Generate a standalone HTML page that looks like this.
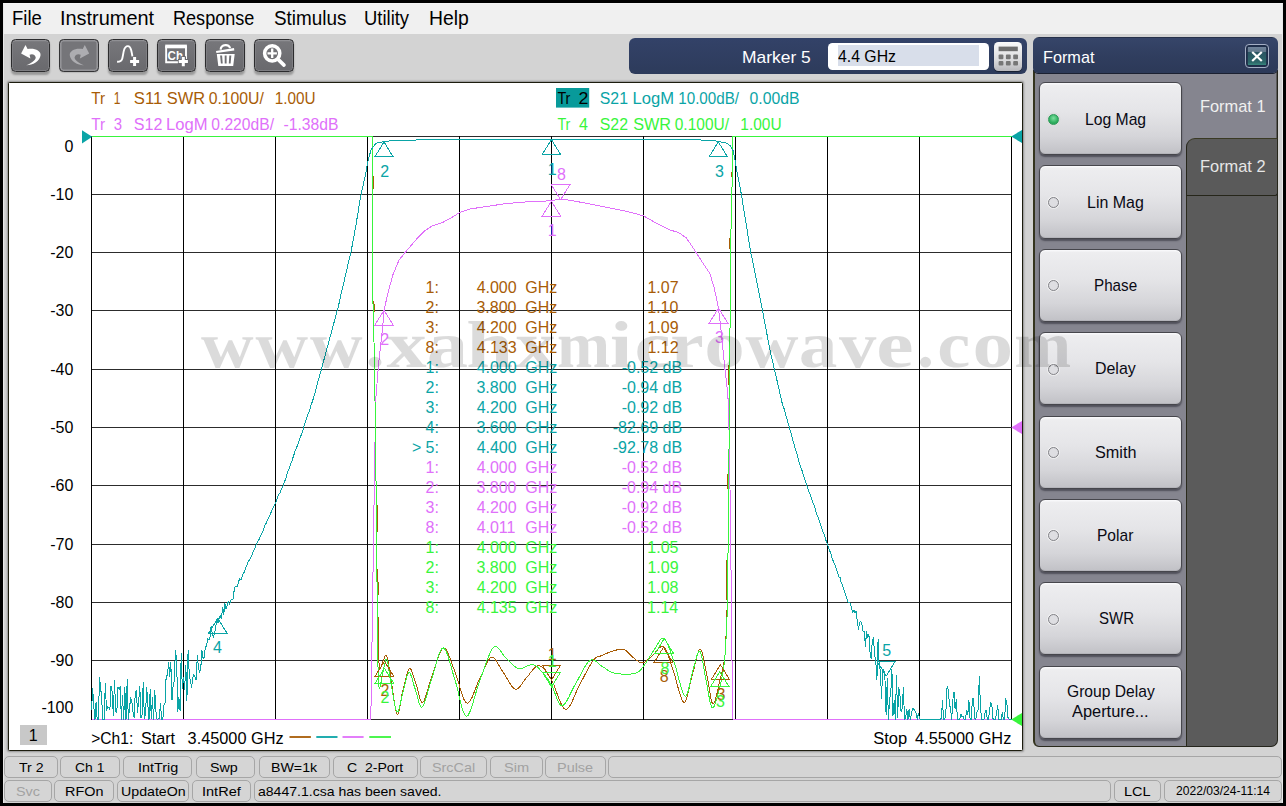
<!DOCTYPE html><html><head><meta charset="utf-8"><title>Network Analyzer</title><style>
html,body{margin:0;padding:0;background:#000;}
body{width:1286px;height:806px;position:relative;overflow:hidden;font-family:"Liberation Sans",sans-serif;}
.app{position:absolute;left:3px;top:3px;width:1280px;height:799.5px;background:#d3d3d3;box-sizing:border-box;border-left:1px solid #e8e8e8;border-top:1px solid #f4f4f4;border-right:1px solid #e9e9e9;}
.menubar{position:absolute;left:4px;top:4px;width:1278px;height:30px;background:#f0f0f0;}
.t{position:absolute;white-space:pre;transform-origin:0 0;z-index:5;}
.chartwin{position:absolute;left:8px;top:82px;width:1015px;height:669px;background:#fff;box-sizing:border-box;border:1px solid #1c1c0e;border-radius:1.5px;box-shadow:0 0 2px 0.5px rgba(0,0,0,.32);}
svg.chart,svg.ov{position:absolute;left:0;top:0;pointer-events:none;}
.tb{position:absolute;top:39.4px;width:39.8px;height:32.2px;box-sizing:border-box;border:1.5px solid #2c2c2e;border-radius:4.5px;background:linear-gradient(#77777b,#707074 50%,#69696d);box-shadow:inset 0 1.2px 0 #909094,inset 0 0 0 1px #7e7e82,0 2.5px 2px rgba(0,0,0,0.28);}
.tb.dis{background:#757579;box-shadow:inset 0 0 0 1.6px #949498,0 1px 1px rgba(0,0,0,0.12);border-color:#343436;}
.mbar{position:absolute;left:628.5px;top:37.8px;width:398.8px;height:36.6px;border-radius:6px;background:linear-gradient(#334268,#2d3b5b);}
.minput{position:absolute;left:828px;top:42.8px;width:161.3px;height:27.4px;border-radius:4.5px;background:#fff;}
.msel{position:absolute;left:10.2px;top:2.3px;width:140.8px;height:21px;background:#d8deea;}
.mcalc{position:absolute;left:994px;top:42.3px;width:28px;height:28.7px;border-radius:4.5px;background:linear-gradient(#fafafa,#dcdcde 60%,#b8b8bc);box-shadow:0 1px 1px rgba(0,0,0,.5);overflow:hidden;}
.phead{position:absolute;left:1033.4px;top:37px;width:244.4px;height:36.4px;border-radius:6px 6px 5px 5px;background:linear-gradient(#1e263a 0,#364569 4%,#303e5f 50%,#2c3958);box-shadow:0 1px 0 #1a2030;z-index:2;}
.pbody{position:absolute;left:1033px;top:70px;width:154.4px;height:677px;box-sizing:border-box;background:#85858f;border:1.6px solid #2a2a1c;border-left:2px solid #34341e;border-top:none;border-radius:0 0 0 6px;}
.pdark{position:absolute;left:1186.6px;top:70px;width:91px;height:677px;box-sizing:border-box;background:#5b5b5b;border:1.4px solid #25251c;border-top:none;border-left:none;border-radius:0 0 7px 0;}
.pdark:before{content:"";position:absolute;left:-1.2px;top:0;width:90.8px;height:78px;background:#85858f;box-sizing:border-box;}
.tab2{position:absolute;left:1186.4px;top:137.6px;width:91.2px;height:58.4px;box-sizing:border-box;background:#5a5a5a;border:1.5px solid #26261a;border-radius:9px 0 3px 0;border-top-color:#3a3a24;}
.pclose{position:absolute;left:1245.4px;top:44.2px;width:23.8px;height:23.8px;box-sizing:border-box;border:1.2px solid #a4aec4;border-radius:4px;background:linear-gradient(#1f2e4a 0,#1f2e4a 9%,#70839a 10%,#62788c 31%,#2a5462 32%,#2d6669 78%,#3a8a80 92%,#1f2e4a 93%);box-shadow:inset 0 0 0 1.8px #1f2e4a;z-index:3;}
.pclose svg{position:absolute;left:0;top:0;}
.sk{position:absolute;left:1038.7px;width:143px;height:73.4px;box-sizing:border-box;border:1.5px solid #46464c;border-radius:6px;background:linear-gradient(#eeeef0,#e5e5e8 40%,#d5d5d9 75%,#c1c1c6);box-shadow:inset 0 1.5px 0 #f8f8fa,inset 0 -1px 0 #b4b4ba,0 2px 1.5px rgba(30,30,40,.5);}
.rad{position:absolute;left:1047.8px;width:11px;height:11px;box-sizing:border-box;border-radius:50%;border:1.8px solid #808085;background:#dedee2;box-shadow:0 0 0 1px rgba(255,255,255,.5);}
.rad.on{border:1.2px solid #2c9a58;background:radial-gradient(circle at 50% 35%,#7fe0a0,#2fb060 60%,#249650);box-shadow:0 0 0 1.5px #dcdcdc;}
.sc{position:absolute;border:1px solid #a6a6a6;border-radius:5px;background:#d5d5d5;}
</style></head><body>
<div class="app"></div>
<div class="menubar"></div>
<div class="t" style="left:12.17px;top:6.80px;font-size:20px;line-height:22px;height:22px;color:#000;transform:scaleX(0.9259);">File</div>
<div class="t" style="left:60.06px;top:6.80px;font-size:20px;line-height:22px;height:22px;color:#000;transform:scaleX(0.9957);">Instrument</div>
<div class="t" style="left:173.41px;top:6.80px;font-size:20px;line-height:22px;height:22px;color:#000;transform:scaleX(0.9035);">Response</div>
<div class="t" style="left:273.55px;top:6.80px;font-size:20px;line-height:22px;height:22px;color:#000;transform:scaleX(0.9441);">Stimulus</div>
<div class="t" style="left:363.77px;top:6.80px;font-size:20px;line-height:22px;height:22px;color:#000;transform:scaleX(0.9218);">Utility</div>
<div class="t" style="left:429.00px;top:6.80px;font-size:20px;line-height:22px;height:22px;color:#000;transform:scaleX(0.9677);">Help</div>
<div class="tb" style="left:10.6px"></div>
<div class="tb dis" style="left:59.2px"></div>
<div class="tb" style="left:107.9px"></div>
<div class="tb" style="left:156.6px"></div>
<div class="tb" style="left:205.4px"></div>
<div class="tb" style="left:254.1px"></div>
<svg class="ov" width="1286" height="806" viewBox="0 0 1286 806"><path d="M21.1 53.5 L25.5 45.1 L27.6 49.1 C31 48.2 35.5 48.8 37.9 50.6 C40 52.2 40.8 53.5 40.5 55.5 C40.2 58 38.5 60.5 35.6 62.5 C33 64.2 29.5 65.2 26.3 65.3 C29 64.6 32 62.6 34.1 60.6 C35.6 59 35.9 57.8 35.6 57 C35.2 55.6 33.8 54.4 31.9 54.3 L29.6 54.7 L30.4 58.4 Z" fill="#fff"/><g transform="translate(110.3 0) scale(-1 1)"><path d="M21.1 53.5 L25.5 45.1 L27.6 49.1 C31 48.2 35.5 48.8 37.9 50.6 C40 52.2 40.8 53.5 40.5 55.5 C40.2 58 38.5 60.5 35.6 62.5 C33 64.2 29.5 65.2 26.3 65.3 C29 64.6 32 62.6 34.1 60.6 C35.6 59 35.9 57.8 35.6 57 C35.2 55.6 33.8 54.4 31.9 54.3 L29.6 54.7 L30.4 58.4 Z" fill="#adadb1"/></g><path d="M117.1 61.8 C120.5 61.9 121.6 61 122.3 58.4 C123 55.8 123.2 53.5 123.8 50.9 C124.6 47.5 126 46.1 127.9 46.1 C129.8 46.1 130.6 47.8 131.2 50.2 C131.8 52.6 132 54 132.4 56.3" stroke="#fff" stroke-width="1.9" fill="none"/><path d="M130.1 61.6 H139.1 M134.6 57.1 V66.1" stroke="#fff" stroke-width="3" fill="none"/><path d="M166.15 46 V62.25 H186 V46" fill="none" stroke="#fff" stroke-width="1.9"/><rect x="165.2" y="44.6" width="21.7" height="3.7" fill="#fff"/><text x="167.6" y="59.5" font-size="12.4" font-weight="bold" fill="#fff" font-family='"Liberation Sans", sans-serif' textLength="15.4" lengthAdjust="spacingAndGlyphs">Ch</text><path d="M177.9 61.6 H188.7 M183.3 56.2 V67" stroke="#69696d" stroke-width="5.4" fill="none"/><path d="M178.7 61.6 H187.9 M183.3 57 V66.2" stroke="#fff" stroke-width="3" fill="none"/><path d="M220.6 49.6 C221 44.2 229.6 43.6 230 48.2" stroke="#fff" stroke-width="2.1" fill="none"/><path d="M216 50.9 L234 47.9 L234.3 50.6 L216.4 52.9 Z" fill="#fff"/><path d="M216.8 53.9 H234.7 L233.2 65.9 H218.3 Z M220.1 55.6 L220.9 63.6 H222.7 L222.1 55.6 Z M224.7 55.6 V63.6 H226.6 V55.6 Z M229.3 55.6 L228.8 63.6 H230.6 L231.3 55.6 Z" fill="#fff" fill-rule="evenodd"/><circle cx="272.2" cy="53.3" r="7.6" stroke="#fff" stroke-width="3.5" fill="none"/><path d="M267.5 53.3 H276.9 M272.2 48.6 V58" stroke="#fff" stroke-width="2.3" fill="none"/><path d="M278.6 59.9 L284 65.1" stroke="#fff" stroke-width="3.6" stroke-linecap="round" fill="none"/></svg>
<div class="mbar"></div>
<div class="minput"><div class="msel"></div></div>
<div class="mcalc"><svg width="28" height="29" viewBox="0 0 28 29"><rect x="4.6" y="4.6" width="19.2" height="4.6" fill="#6e6e6e"/><rect x="4.6" y="12.6" width="4.8" height="4.6" rx="1" fill="#767676"/><rect x="4.6" y="19.0" width="4.8" height="4.6" rx="1" fill="#767676"/><rect x="11.9" y="12.6" width="4.8" height="4.6" rx="1" fill="#767676"/><rect x="11.9" y="19.0" width="4.8" height="4.6" rx="1" fill="#767676"/><rect x="19.2" y="12.6" width="4.8" height="4.6" rx="1" fill="#767676"/><rect x="19.2" y="19.0" width="4.8" height="4.6" rx="1" fill="#767676"/></svg></div>
<div class="t" style="left:742.16px;top:47.70px;font-size:17px;line-height:19px;height:19px;color:#fff;transform:scaleX(1.0249);">Marker 5</div>
<div class="t" style="left:838.34px;top:47.00px;font-size:16.5px;line-height:18px;height:18px;color:#000;transform:scaleX(0.9576);">4.4 GHz</div>
<div class="chartwin"></div>
<svg class="chart" width="1286" height="806" viewBox="0 0 1286 806" font-family='"Liberation Sans", sans-serif'>
<path d="M91.0 136.5 H1012.0 M91.0 194.5 H1012.0 M91.0 252.5 H1012.0 M91.0 310.5 H1012.0 M91.0 369.5 H1012.0 M91.0 427.5 H1012.0 M91.0 485.5 H1012.0 M91.0 544.5 H1012.0 M91.0 602.5 H1012.0 M91.0 660.5 H1012.0 M91.0 719.5 H1012.0" stroke="#2c2c2c" stroke-width="1" fill="none" shape-rendering="crispEdges"/>
<path d="M91.5 136.0 V720.0 M183.5 136.0 V720.0 M275.5 136.0 V720.0 M367.5 136.0 V720.0 M459.5 136.0 V720.0 M551.5 136.0 V720.0 M643.5 136.0 V720.0 M735.5 136.0 V720.0 M827.5 136.0 V720.0 M919.5 136.0 V720.0 M1011.5 136.0 V720.0" stroke="#000" stroke-width="1" fill="none" shape-rendering="crispEdges"/>
<text x="91.16" y="103.80" font-size="16" fill="#a85c06" textLength="13.86" lengthAdjust="spacingAndGlyphs" >Tr</text>
<text x="113.70" y="103.80" font-size="16" fill="#a85c06" textLength="6.69" lengthAdjust="spacingAndGlyphs" >1</text>
<text x="133.75" y="103.80" font-size="16" fill="#a85c06" textLength="28.45" lengthAdjust="spacingAndGlyphs" >S11</text>
<text x="166.76" y="103.80" font-size="16" fill="#a85c06" textLength="38.33" lengthAdjust="spacingAndGlyphs" >SWR</text>
<text x="208.67" y="103.80" font-size="16" fill="#a85c06" textLength="55.23" lengthAdjust="spacingAndGlyphs" >0.100U/</text>
<text x="274.85" y="103.80" font-size="16" fill="#a85c06" textLength="40.81" lengthAdjust="spacingAndGlyphs" >1.00U</text>
<text x="91.16" y="129.50" font-size="16" fill="#e070fa" textLength="13.86" lengthAdjust="spacingAndGlyphs" >Tr</text>
<text x="113.74" y="129.50" font-size="16" fill="#e070fa" textLength="8.31" lengthAdjust="spacingAndGlyphs" >3</text>
<text x="133.78" y="129.50" font-size="16" fill="#e070fa" textLength="28.66" lengthAdjust="spacingAndGlyphs" >S12</text>
<text x="166.13" y="129.50" font-size="16" fill="#e070fa" textLength="41.57" lengthAdjust="spacingAndGlyphs" >LogM</text>
<text x="211.37" y="129.50" font-size="16" fill="#e070fa" textLength="62.64" lengthAdjust="spacingAndGlyphs" >0.220dB/</text>
<text x="283.49" y="129.50" font-size="16" fill="#e070fa" textLength="55.03" lengthAdjust="spacingAndGlyphs" >-1.38dB</text>
<rect x="556" y="88" width="33.2" height="19.6" fill="#089a9a"/>
<text x="557.38" y="103.80" font-size="16" fill="#000" textLength="13.03" lengthAdjust="spacingAndGlyphs" >Tr</text>
<text x="578.41" y="103.80" font-size="16" fill="#000" textLength="9.90" lengthAdjust="spacingAndGlyphs" >2</text>
<text x="599.79" y="103.80" font-size="16" fill="#0aa4a6" textLength="28.19" lengthAdjust="spacingAndGlyphs" >S21</text>
<text x="632.53" y="103.80" font-size="16" fill="#0aa4a6" textLength="41.57" lengthAdjust="spacingAndGlyphs" >LogM</text>
<text x="678.26" y="103.80" font-size="16" fill="#0aa4a6" textLength="60.75" lengthAdjust="spacingAndGlyphs" >10.00dB/</text>
<text x="749.57" y="103.80" font-size="16" fill="#0aa4a6" textLength="49.95" lengthAdjust="spacingAndGlyphs" >0.00dB</text>
<text x="557.38" y="129.50" font-size="16" fill="#38f53c" textLength="13.03" lengthAdjust="spacingAndGlyphs" >Tr</text>
<text x="578.94" y="129.50" font-size="16" fill="#38f53c" textLength="8.92" lengthAdjust="spacingAndGlyphs" >4</text>
<text x="599.79" y="129.50" font-size="16" fill="#38f53c" textLength="28.24" lengthAdjust="spacingAndGlyphs" >S22</text>
<text x="633.17" y="129.50" font-size="16" fill="#38f53c" textLength="37.91" lengthAdjust="spacingAndGlyphs" >SWR</text>
<text x="674.78" y="129.50" font-size="16" fill="#38f53c" textLength="54.22" lengthAdjust="spacingAndGlyphs" >0.100U/</text>
<text x="740.34" y="129.50" font-size="16" fill="#38f53c" textLength="41.34" lengthAdjust="spacingAndGlyphs" >1.00U</text>
<text x="64.52" y="152.05" font-size="16" fill="#000" textLength="8.90" lengthAdjust="spacingAndGlyphs" >0</text>
<text x="50.28" y="200.25" font-size="16" fill="#000" textLength="23.13" lengthAdjust="spacingAndGlyphs" >-10</text>
<text x="50.28" y="258.25" font-size="16" fill="#000" textLength="23.13" lengthAdjust="spacingAndGlyphs" >-20</text>
<text x="50.28" y="316.25" font-size="16" fill="#000" textLength="23.13" lengthAdjust="spacingAndGlyphs" >-30</text>
<text x="50.28" y="375.25" font-size="16" fill="#000" textLength="23.13" lengthAdjust="spacingAndGlyphs" >-40</text>
<text x="50.28" y="433.25" font-size="16" fill="#000" textLength="23.13" lengthAdjust="spacingAndGlyphs" >-50</text>
<text x="50.28" y="491.25" font-size="16" fill="#000" textLength="23.13" lengthAdjust="spacingAndGlyphs" >-60</text>
<text x="50.28" y="550.25" font-size="16" fill="#000" textLength="23.13" lengthAdjust="spacingAndGlyphs" >-70</text>
<text x="50.28" y="608.25" font-size="16" fill="#000" textLength="23.13" lengthAdjust="spacingAndGlyphs" >-80</text>
<text x="50.28" y="666.25" font-size="16" fill="#000" textLength="23.13" lengthAdjust="spacingAndGlyphs" >-90</text>
<text x="41.40" y="713.05" font-size="16" fill="#000" textLength="32.02" lengthAdjust="spacingAndGlyphs" >-100</text>
<polyline points="373.5,176.0 373.5,295.0 374.5,312.0 376.5,430.0 378.2,600.0 378.2,640.0" fill="none" stroke="#a85c06" stroke-width="1" stroke-linejoin="round" shape-rendering="crispEdges" stroke-dasharray="13 112 11 193 27 37 26 22 400"/>
<polyline points="378.2,640.0 378.3,642.4 378.4,645.9 378.5,650.0 378.7,654.5 378.8,658.9 379.0,662.9 379.3,666.0 379.6,668.0 380.0,668.7 380.4,668.4 380.9,667.5 381.5,666.0 382.0,664.3 382.5,662.6 383.0,661.1 383.5,660.0 383.9,659.1 384.3,658.1 384.6,657.1 385.0,656.2 385.3,655.5 385.6,655.1 386.0,655.0 386.4,655.5 386.8,656.4 387.2,657.6 387.5,659.0 387.9,660.8 388.4,663.0 388.8,665.6 389.4,668.6 390.0,672.0 390.7,676.5 391.5,682.3 392.4,688.8 393.4,695.5 394.3,702.0 395.2,707.5 396.1,711.7 397.0,714.0 397.8,714.1 398.6,712.6 399.3,709.7 400.0,706.0 400.8,701.7 401.5,697.4 402.2,693.3 403.0,690.0 403.8,686.9 404.6,683.6 405.4,680.1 406.2,676.8 407.0,673.7 407.9,671.2 408.7,669.4 409.5,668.5 410.3,668.6 411.1,669.7 411.9,671.5 412.7,673.8 413.5,676.3 414.4,679.1 415.2,681.7 416.0,684.0 416.8,686.5 417.6,689.4 418.4,692.7 419.2,695.8 420.0,698.7 420.8,700.9 421.7,702.2 422.7,702.4 423.7,701.3 424.8,699.0 425.9,695.9 427.0,692.1 428.2,688.0 429.4,683.8 430.7,679.7 432.0,676.0 433.4,672.2 434.8,667.9 436.2,663.3 437.7,658.9 439.2,654.8 440.7,651.4 442.2,649.0 443.7,648.0 445.1,648.5 446.5,650.2 447.9,652.9 449.3,656.3 450.7,660.2 452.1,664.3 453.6,668.3 455.0,672.0 456.5,675.9 457.9,680.6 459.4,685.7 460.9,690.7 462.4,695.3 463.9,699.2 465.4,701.9 467.0,703.2 468.6,702.7 470.2,700.8 471.9,697.7 473.5,693.8 475.2,689.6 476.8,685.3 478.4,681.3 480.0,678.0 481.5,675.0 483.0,671.7 484.4,668.4 485.8,665.2 487.2,662.3 488.6,659.9 490.0,658.2 491.4,657.3 492.8,657.4 494.3,658.4 495.7,660.1 497.1,662.3 498.6,664.7 500.0,667.3 501.5,669.8 503.0,672.0 504.5,674.2 506.1,676.8 507.7,679.6 509.3,682.3 510.8,684.8 512.4,686.9 514.0,688.4 515.5,689.2 517.0,689.1 518.4,688.2 519.9,686.7 521.3,684.9 522.7,682.8 524.1,680.7 525.6,678.7 527.0,677.0 528.5,675.4 529.9,673.5 531.4,671.5 532.9,669.6 534.4,668.0 535.9,666.6 537.4,665.8 538.9,665.6 540.4,666.1 542.0,667.0 543.5,668.5 545.1,670.3 546.6,672.4 548.2,674.7 549.9,677.3 551.5,680.0 553.2,683.3 554.9,687.6 556.6,692.3 558.4,697.2 560.2,701.7 561.9,705.6 563.7,708.2 565.5,709.4 567.3,708.8 569.1,706.9 571.0,703.8 572.8,700.0 574.6,695.8 576.5,691.5 578.2,687.5 580.0,684.0 581.7,680.8 583.5,677.5 585.2,674.2 587.0,670.9 588.6,667.8 590.3,664.9 591.8,662.4 593.2,660.4 594.5,658.9 595.5,657.9 596.5,657.2 597.4,656.8 598.3,656.6 599.3,656.3 600.5,656.0 601.8,655.5 603.4,654.8 605.2,654.0 607.1,653.2 609.2,652.4 611.2,651.7 613.1,651.0 614.9,650.4 616.5,650.0 617.9,649.7 619.1,649.5 620.2,649.3 621.2,649.2 622.2,649.3 623.1,649.4 624.1,649.7 625.0,650.0 625.9,650.5 626.8,651.2 627.6,652.0 628.4,652.9 629.2,653.8 630.1,654.7 631.0,655.7 632.0,656.5 633.1,657.4 634.3,658.4 635.6,659.5 636.9,660.5 638.3,661.4 639.6,662.2 640.9,662.6 642.2,662.8 643.4,662.6 644.6,662.1 645.8,661.3 647.0,660.4 648.2,659.3 649.4,658.2 650.7,657.1 652.0,656.0 653.4,654.7 654.8,653.1 656.3,651.3 657.8,649.5 659.3,647.9 660.7,646.8 662.1,646.3 663.5,646.7 664.8,648.0 666.0,650.0 667.1,652.6 668.3,655.7 669.4,659.2 670.6,662.8 671.8,666.4 673.0,670.0 674.3,674.0 675.7,678.8 677.1,684.1 678.5,689.3 680.0,694.2 681.3,698.2 682.7,701.1 683.9,702.4 685.0,701.9 686.1,699.9 687.1,696.8 688.1,692.9 689.1,688.5 690.0,684.0 691.0,679.7 692.0,676.0 693.0,672.3 694.1,668.1 695.1,663.6 696.2,659.3 697.2,655.3 698.2,652.1 699.2,650.0 700.2,649.2 701.1,650.0 702.0,652.1 702.9,655.3 703.7,659.2 704.6,663.5 705.4,668.0 706.2,672.2 707.0,676.0 707.8,679.8 708.5,684.1 709.3,688.7 710.0,693.2 710.7,697.3 711.4,700.6 712.2,703.0 713.0,704.0 713.8,703.5 714.7,701.7 715.6,698.9 716.6,695.3 717.5,691.4 718.4,687.3 719.2,683.4 720.0,680.0 720.7,677.0 721.5,674.1 722.2,671.1 722.9,668.2 723.5,665.2 724.1,662.0 724.6,658.6 725.0,655.0 725.4,650.9 725.6,646.1 725.9,641.1 726.0,635.9 726.1,631.0 726.2,626.5 726.3,622.8 726.4,620.0" fill="none" stroke="#a85c06" stroke-width="1" stroke-linejoin="round" shape-rendering="crispEdges" />
<polyline points="731.6,172.0 730.5,200.0 729.5,260.0 728.5,400.0 727.3,520.0 726.6,600.0 726.4,620.0" fill="none" stroke="#a85c06" stroke-width="1" stroke-linejoin="round" shape-rendering="crispEdges" stroke-dasharray="5 61 11 116 20 89 15 71 40 10 400"/>
<polyline points="91.5,719.5 370.6,719.5 371.2,700.0 372.6,600.0 374.4,480.0 375.7,400.0 378.5,365.0 382.4,330.0 384.1,310.2 387.6,294.2 392.8,275.1 398.9,260.3 405.8,251.7 415.4,240.4 424.0,231.3 431.9,226.1 442.3,222.7 451.8,217.4 459.6,212.6 469.2,209.1 486.6,206.5 503.9,203.9 521.3,202.2 538.7,201.3 551.7,200.8 556.0,199.8 560.4,199.0 565.0,199.6 576.0,201.3 602.1,206.5 628.2,211.7 643.8,216.0 657.7,223.9 669.8,229.9 678.5,232.5 686.3,237.8 695.0,250.8 702.8,262.9 709.8,273.4 714.1,287.3 718.5,308.1 721.0,330.0 724.5,365.0 727.9,395.0 729.0,430.0 730.2,500.0 731.6,620.0 732.4,700.0 733.0,719.5 1011.5,719.5" fill="none" stroke="#e070fa" stroke-width="1" stroke-linejoin="round" shape-rendering="crispEdges" />
<polyline points="91.5,136.5 372.5,136.5 372.5,295.0 373.5,312.0 375.5,430.0 377.2,600.0 377.4,640.0 377.5,644.0 377.6,649.9 377.8,656.9 377.9,664.4 378.2,671.9 378.4,678.5 378.7,683.8 379.0,687.0 379.4,688.1 379.8,687.6 380.3,685.8 380.9,683.2 381.4,680.2 382.0,677.0 382.5,674.2 383.0,672.0 383.5,670.1 383.9,667.9 384.4,665.6 384.9,663.4 385.3,661.4 385.8,660.0 386.2,659.2 386.7,659.2 387.2,660.1 387.6,661.8 388.0,664.1 388.4,666.8 388.9,669.9 389.4,673.2 389.9,676.6 390.5,680.0 391.2,683.8 391.9,688.4 392.8,693.4 393.6,698.4 394.5,703.2 395.3,707.2 396.2,710.2 397.0,711.8 397.8,711.8 398.5,710.5 399.3,708.1 400.0,705.1 400.8,701.7 401.5,698.1 402.3,694.8 403.0,692.0 403.7,689.3 404.5,686.3 405.2,683.1 406.0,680.0 406.7,677.2 407.5,674.9 408.2,673.3 409.0,672.6 409.8,673.0 410.6,674.4 411.4,676.4 412.2,679.0 413.0,681.9 413.8,684.8 414.7,687.6 415.5,690.0 416.3,692.5 417.1,695.4 417.9,698.4 418.6,701.4 419.5,704.0 420.3,706.0 421.2,707.1 422.2,707.0 423.3,705.6 424.4,703.0 425.6,699.6 426.8,695.5 428.1,691.0 429.4,686.4 430.7,682.0 432.0,678.0 433.3,673.8 434.7,669.0 436.1,664.0 437.5,659.0 438.9,654.5 440.3,650.9 441.8,648.5 443.2,647.7 444.6,648.7 446.1,651.3 447.6,655.0 449.1,659.7 450.6,664.8 452.1,670.2 453.5,675.3 455.0,680.0 456.4,684.9 457.8,690.5 459.2,696.5 460.6,702.5 462.1,707.9 463.5,712.3 465.0,715.3 466.5,716.4 468.1,715.3 469.7,712.3 471.4,707.9 473.1,702.5 474.8,696.6 476.6,690.6 478.3,684.9 480.0,680.0 481.7,675.4 483.4,670.5 485.2,665.5 486.9,660.7 488.7,656.1 490.4,652.3 492.1,649.2 493.7,647.2 495.3,646.5 496.9,646.8 498.4,648.1 499.9,649.9 501.4,652.1 502.9,654.3 504.5,656.4 506.0,658.0 507.6,659.4 509.1,661.0 510.6,662.6 512.2,664.2 513.8,665.6 515.3,666.9 517.0,667.9 518.6,668.5 520.3,668.6 522.1,668.3 523.9,667.6 525.8,666.7 527.6,665.9 529.4,665.1 531.1,664.6 532.6,664.6 534.0,664.9 535.3,665.5 536.5,666.3 537.6,667.2 538.7,668.3 539.7,669.5 540.8,670.7 542.0,672.0 543.2,673.3 544.4,674.7 545.5,676.2 546.7,677.8 547.9,679.5 549.1,681.3 550.4,683.3 551.6,685.3 552.8,687.8 554.1,690.9 555.3,694.4 556.6,697.8 557.9,701.0 559.2,703.6 560.6,705.3 562.1,705.8 563.7,705.0 565.3,703.1 567.1,700.4 568.8,697.1 570.6,693.4 572.4,689.7 574.2,686.1 576.0,683.0 577.8,680.0 579.5,676.7 581.3,673.2 583.1,669.9 584.9,666.7 586.7,664.0 588.4,661.8 590.1,660.4 591.8,659.8 593.4,660.0 595.1,660.7 596.7,661.9 598.3,663.3 599.9,664.7 601.4,666.0 603.0,667.0 604.5,667.8 605.9,668.7 607.2,669.7 608.5,670.6 609.9,671.4 611.4,672.2 613.1,672.8 615.0,673.3 617.2,673.7 619.7,673.9 622.5,674.1 625.3,674.2 628.1,674.2 630.7,674.0 633.1,673.7 635.2,673.3 636.9,672.7 638.3,672.0 639.5,671.1 640.5,670.1 641.5,669.0 642.4,667.7 643.4,666.4 644.5,665.0 645.7,663.4 646.8,661.6 648.0,659.7 649.2,657.7 650.4,655.7 651.6,653.7 652.8,651.8 654.0,650.0 655.2,648.1 656.5,646.0 657.7,643.9 659.0,641.8 660.2,640.0 661.5,638.7 662.7,638.1 664.0,638.4 665.2,639.6 666.5,641.6 667.7,644.2 668.9,647.3 670.2,650.8 671.4,654.5 672.7,658.3 674.0,662.0 675.4,666.2 676.8,671.2 678.2,676.6 679.7,682.1 681.1,687.2 682.5,691.5 683.8,694.6 685.0,696.2 686.1,695.9 687.1,694.2 688.1,691.3 689.0,687.5 689.9,683.4 690.7,679.2 691.6,675.3 692.5,672.0 693.4,668.9 694.3,665.4 695.3,661.7 696.2,658.2 697.1,655.1 698.0,652.7 698.8,651.3 699.7,651.1 700.5,652.3 701.3,654.8 702.1,658.3 702.9,662.5 703.7,667.0 704.5,671.7 705.2,676.1 706.0,680.0 706.8,683.8 707.5,688.1 708.3,692.5 709.1,696.9 709.8,700.8 710.6,704.2 711.4,706.6 712.2,707.9 713.0,707.9 713.9,706.8 714.8,704.9 715.7,702.3 716.6,699.2 717.4,696.0 718.2,692.9 719.0,690.0 719.7,687.3 720.4,684.5 721.1,681.6 721.8,678.6 722.4,675.4 723.0,672.1 723.5,668.7 724.0,665.0 724.5,660.9 724.9,656.1 725.3,651.1 725.6,645.9 725.9,641.0 726.2,636.5 726.4,632.8 726.6,630.0 727.6,600.0 728.3,520.0 729.5,400.0 730.5,260.0 731.5,200.0 732.6,172.0 732.8,136.5 1011.5,136.5" fill="none" stroke="#38f53c" stroke-width="1" stroke-linejoin="round" shape-rendering="crispEdges" />
<polyline points="91.5,709.6 92.7,688.8 93.8,707.2 95.0,719.5 96.1,701.8 97.2,719.5 98.4,719.5 99.5,677.7 100.7,687.1 101.8,702.4 103.0,719.5 104.2,719.5 105.3,683.9 106.5,710.1 107.6,706.7 108.8,707.5 109.9,709.4 111.0,685.6 112.2,692.5 113.3,715.6 114.5,680.3 115.7,711.9 116.8,712.5 118.0,687.0 119.1,689.4 120.2,686.4 121.4,719.5 122.5,695.2 123.7,719.5 124.8,687.1 126.0,719.5 127.2,679.9 128.3,719.5 129.4,709.8 130.6,697.3 131.8,701.2 132.9,711.0 134.1,717.6 135.2,694.1 136.3,690.6 137.5,712.2 138.7,701.3 139.8,686.0 140.9,718.1 142.1,715.0 143.2,682.5 144.4,718.8 145.6,713.1 146.7,687.3 147.8,704.2 149.0,719.5 150.2,689.5 151.3,718.5 152.4,697.0 153.6,719.5 154.8,690.7 155.9,711.0 157.1,719.5 158.2,719.0 159.3,718.2 160.5,703.3 161.6,719.5 162.8,719.5 163.9,704.9 165.1,702.5 166.2,675.1 167.4,675.8 168.6,662.2 169.7,676.1 170.8,662.1 172.0,699.8 173.1,685.9 174.3,680.4 175.4,650.1 176.6,659.7 177.8,711.5 178.9,697.2 180.1,711.2 181.2,653.0 182.3,688.1 183.5,677.2 184.6,689.5 185.8,665.2 186.9,700.2 188.1,650.4 189.2,673.3 190.4,681.2 191.6,687.2 192.7,677.8 193.8,674.6 195.0,676.7 196.1,680.0 197.3,655.6 198.4,667.2 199.6,672.2 200.8,667.7 201.9,650.5 203.1,658.7 204.2,657.3 205.3,647.4 206.5,645.8 207.6,638.9 208.8,640.1 209.9,638.1 211.1,626.1 212.2,633.6 213.4,637.1 214.6,632.6 215.7,627.5 216.8,619.8 218.0,622.7 219.1,618.7 220.3,615.0 221.4,618.8 222.6,607.0 223.8,614.1 224.9,603.3 226.0,608.8 227.2,605.6 228.3,601.1 229.5,604.7 230.6,600.4 231.8,599.1 232.9,599.4 234.1,590.8 235.2,586.4 236.4,586.5 237.5,586.8 238.7,581.1 239.8,578.6 241.0,580.3 242.1,576.4 243.3,572.9 244.4,572.1 245.6,567.6 246.8,566.1 247.9,562.5 249.0,560.6 250.2,558.7 251.3,556.3 252.5,553.8 253.6,550.6 254.8,548.4 255.9,545.6 257.1,542.8 258.2,540.8 259.4,538.7 260.5,536.2 261.7,533.4 262.9,531.2 264.0,527.7 265.1,525.0 266.3,522.9 267.4,520.1 268.6,517.4 269.8,515.2 270.9,512.9 272.0,510.2 273.2,507.4 274.4,505.6 275.5,503.2 276.6,499.9 277.8,496.8 278.9,494.2 280.1,492.9 281.2,489.1 282.4,487.5 283.5,484.8 284.7,481.1 285.9,478.5 287.0,474.2 288.1,471.1 289.3,468.3 290.4,464.4 291.6,462.3 292.8,458.2 293.9,454.8 295.0,451.4 296.2,448.9 297.4,445.4 298.5,442.4 299.6,439.1 300.8,436.1 301.9,433.0 303.1,429.4 304.2,425.4 305.4,422.4 306.5,418.6 307.7,414.9 308.9,412.2 310.0,409.1 311.1,405.0 312.3,401.7 313.4,398.3 314.6,394.1 315.8,389.9 316.9,385.6 318.0,381.4 319.2,377.2 320.4,372.9 321.5,368.7 322.6,364.5 323.8,360.3 324.9,356.0 326.1,351.8 327.2,347.6 328.4,343.3 329.5,339.1 330.7,334.9 331.9,330.6 333.0,326.4 334.1,322.2 335.3,317.9 336.4,313.7 337.6,309.3 338.8,304.4 339.9,299.4 341.0,294.5 342.2,289.6 343.4,284.6 344.5,279.7 345.6,274.7 346.8,269.8 347.9,264.8 349.1,259.9 350.2,254.9 351.4,250.0 352.5,243.7 353.7,237.4 354.8,231.1 356.0,224.7 357.1,218.0 358.3,211.0 359.4,204.0 360.6,196.9 361.8,191.2 362.9,186.1 364.0,181.1 365.2,176.0 366.3,170.0 367.5,163.7 368.6,158.2 369.8,154.3 370.9,150.3 372.1,148.3 373.2,146.8 374.4,145.3 375.5,143.8 376.7,143.2 377.8,142.9 379.0,142.7 380.1,142.4 381.3,142.1 382.4,141.8 383.6,141.6 384.8,141.5 385.9,141.4 387.0,141.3 388.2,141.1 389.3,141.0 390.5,140.9 391.6,140.8 392.8,140.7 393.9,140.6 395.1,140.5 396.2,140.4 397.4,140.3 398.5,140.3 399.7,140.3 400.8,140.2 402.0,140.2 403.1,140.2 404.3,140.2 405.4,140.1 406.6,140.1 407.8,140.1 408.9,140.1 410.0,140.1 411.2,140.0 412.3,140.0 413.5,140.0 414.6,140.0 415.8,140.0 416.9,139.9 418.1,139.9 419.2,139.9 420.4,139.9 421.5,139.9 422.7,139.8 423.8,139.8 425.0,139.8 426.1,139.8 427.3,139.7 428.4,139.7 429.6,139.7 430.8,139.7 431.9,139.7 433.0,139.7 434.2,139.7 435.3,139.7 436.5,139.7 437.6,139.7 438.8,139.7 439.9,139.7 441.1,139.7 442.2,139.7 443.4,139.7 444.5,139.7 445.7,139.7 446.8,139.7 448.0,139.7 449.1,139.7 450.3,139.7 451.4,139.7 452.6,139.7 453.8,139.7 454.9,139.7 456.0,139.7 457.2,139.7 458.3,139.7 459.5,139.7 460.6,139.7 461.8,139.7 462.9,139.7 464.1,139.7 465.2,139.7 466.4,139.7 467.5,139.7 468.7,139.7 469.8,139.7 471.0,139.7 472.1,139.7 473.3,139.7 474.4,139.7 475.6,139.7 476.7,139.7 477.9,139.7 479.0,139.7 480.2,139.7 481.3,139.7 482.5,139.7 483.6,139.7 484.8,139.7 485.9,139.7 487.1,139.7 488.2,139.7 489.4,139.7 490.5,139.6 491.7,139.6 492.8,139.6 494.0,139.6 495.1,139.6 496.3,139.6 497.4,139.6 498.6,139.6 499.7,139.6 500.9,139.6 502.0,139.6 503.2,139.6 504.3,139.6 505.5,139.6 506.6,139.6 507.8,139.6 508.9,139.6 510.1,139.6 511.2,139.6 512.4,139.6 513.5,139.6 514.7,139.6 515.8,139.6 517.0,139.6 518.1,139.6 519.3,139.6 520.5,139.6 521.6,139.6 522.8,139.6 523.9,139.6 525.0,139.6 526.2,139.6 527.3,139.6 528.5,139.6 529.6,139.6 530.8,139.6 532.0,139.6 533.1,139.6 534.2,139.6 535.4,139.6 536.5,139.6 537.7,139.6 538.8,139.6 540.0,139.6 541.1,139.6 542.3,139.6 543.5,139.6 544.6,139.6 545.8,139.6 546.9,139.6 548.0,139.6 549.2,139.6 550.3,139.6 551.5,139.6 552.6,139.6 553.8,139.6 555.0,139.6 556.1,139.6 557.2,139.6 558.4,139.6 559.5,139.6 560.7,139.6 561.8,139.6 563.0,139.6 564.1,139.6 565.3,139.6 566.5,139.6 567.6,139.6 568.8,139.6 569.9,139.6 571.0,139.6 572.2,139.6 573.3,139.6 574.5,139.6 575.6,139.6 576.8,139.6 578.0,139.6 579.1,139.6 580.2,139.6 581.4,139.6 582.5,139.6 583.7,139.6 584.8,139.6 586.0,139.6 587.1,139.6 588.3,139.6 589.5,139.6 590.6,139.6 591.8,139.6 592.9,139.6 594.0,139.6 595.2,139.6 596.3,139.6 597.5,139.6 598.6,139.6 599.8,139.6 601.0,139.6 602.1,139.6 603.2,139.6 604.4,139.6 605.5,139.6 606.7,139.6 607.8,139.6 609.0,139.6 610.1,139.6 611.3,139.6 612.4,139.6 613.6,139.6 614.8,139.6 615.9,139.6 617.0,139.6 618.2,139.6 619.3,139.6 620.5,139.6 621.6,139.6 622.8,139.6 623.9,139.6 625.1,139.6 626.2,139.6 627.4,139.6 628.5,139.6 629.7,139.6 630.8,139.6 632.0,139.6 633.1,139.6 634.3,139.6 635.4,139.6 636.6,139.6 637.8,139.6 638.9,139.6 640.0,139.6 641.2,139.6 642.3,139.6 643.5,139.6 644.6,139.6 645.8,139.6 646.9,139.6 648.1,139.6 649.2,139.6 650.4,139.6 651.5,139.6 652.7,139.6 653.8,139.6 655.0,139.6 656.1,139.6 657.3,139.6 658.4,139.6 659.6,139.6 660.8,139.6 661.9,139.6 663.0,139.6 664.2,139.6 665.3,139.6 666.5,139.6 667.6,139.6 668.8,139.6 669.9,139.6 671.1,139.6 672.2,139.6 673.4,139.6 674.5,139.6 675.7,139.6 676.8,139.6 678.0,139.6 679.1,139.6 680.3,139.6 681.4,139.6 682.6,139.6 683.8,139.6 684.9,139.6 686.0,139.6 687.2,139.6 688.3,139.6 689.5,139.6 690.6,139.7 691.8,139.7 692.9,139.7 694.1,139.8 695.2,139.8 696.4,139.8 697.5,139.9 698.7,139.9 699.8,139.9 701.0,140.0 702.1,140.0 703.3,140.1 704.4,140.1 705.6,140.1 706.8,140.2 707.9,140.2 709.0,140.2 710.2,140.3 711.3,140.3 712.5,140.4 713.6,140.4 714.8,140.7 715.9,141.0 717.1,141.3 718.2,141.6 719.4,141.8 720.5,141.9 721.7,142.1 722.8,142.3 724.0,142.4 725.1,142.6 726.3,143.1 727.4,143.8 728.6,144.6 729.8,145.3 730.9,146.8 732.0,148.8 733.2,150.8 734.3,156.5 735.5,163.0 736.6,169.5 737.8,175.5 738.9,181.5 740.1,187.5 741.2,193.5 742.4,200.6 743.5,207.8 744.7,215.0 745.8,222.1 747.0,229.3 748.1,236.5 749.3,243.7 750.4,250.7 751.6,256.3 752.8,262.0 753.9,267.6 755.0,273.2 756.2,278.8 757.3,284.4 758.5,290.0 759.6,295.7 760.8,301.7 761.9,307.8 763.1,313.8 764.2,319.8 765.4,325.9 766.5,331.9 767.7,337.9 768.8,344.0 770.0,350.0 771.1,355.0 772.3,360.0 773.4,365.0 774.6,370.0 775.8,375.0 776.9,380.0 778.0,385.0 779.2,390.0 780.3,395.0 781.5,400.6 782.6,404.6 783.8,407.7 784.9,411.9 786.1,415.9 787.2,420.0 788.4,424.1 789.5,428.1 790.7,431.8 791.8,436.4 793.0,440.8 794.1,444.4 795.3,448.9 796.4,452.5 797.6,456.0 798.8,460.9 799.9,465.1 801.0,468.0 802.2,470.9 803.3,475.0 804.5,478.3 805.6,481.7 806.8,485.5 807.9,488.4 809.1,491.9 810.2,494.2 811.4,498.2 812.5,501.9 813.7,504.2 814.8,507.5 816.0,511.8 817.1,515.3 818.3,517.5 819.4,521.6 820.6,524.2 821.8,528.3 822.9,531.5 824.0,534.3 825.2,537.6 826.3,541.6 827.5,544.6 828.6,548.2 829.8,550.9 830.9,554.0 832.1,558.1 833.2,560.9 834.4,563.5 835.5,566.5 836.7,570.1 837.8,573.1 839.0,577.1 840.1,577.5 841.3,582.9 842.4,584.9 843.6,589.3 844.7,592.0 845.9,595.4 847.0,599.0 848.2,602.6 849.3,602.0 850.5,603.4 851.6,608.3 852.8,612.2 853.9,610.1 855.1,612.7 856.2,611.4 857.4,622.6 858.5,629.2 859.7,622.4 860.8,621.5 862.0,624.6 863.1,631.0 864.3,631.0 865.4,646.2 866.6,631.3 867.7,638.0 868.9,634.7 870.0,651.9 871.2,659.1 872.3,640.7 873.5,637.5 874.6,654.9 875.8,662.1 876.9,679.2 878.1,639.0 879.2,666.2 880.4,671.0 881.5,698.1 882.7,669.4 883.8,669.6 885.0,680.3 886.1,715.2 887.3,678.5 888.4,719.5 889.6,698.6 890.7,695.0 891.9,669.0 893.0,715.5 894.2,700.2 895.3,719.5 896.5,675.6 897.6,717.4 898.8,687.7 899.9,694.5 901.1,711.9 902.2,708.3 903.4,687.8 904.5,719.5 905.7,717.1 906.8,709.0 908.0,719.5 909.1,709.0 910.3,719.5 911.4,713.7 912.6,708.3 913.7,708.9 914.9,711.1 916.0,712.7 917.2,719.5 918.3,713.7 919.5,718.3 920.6,719.5 921.8,719.5 922.9,719.5 924.1,719.5 925.2,719.5 926.4,719.5 927.5,719.5 928.7,719.5 929.8,719.5 931.0,719.5 932.1,719.5 933.3,719.5 934.4,719.5 935.6,719.5 936.7,719.5 937.9,719.5 939.0,719.5 940.2,719.5 941.3,718.3 942.5,701.0 943.6,719.5 944.8,719.5 945.9,711.3 947.1,686.5 948.2,689.2 949.4,703.8 950.5,708.7 951.7,719.5 952.8,700.0 954.0,691.9 955.1,709.0 956.3,699.6 957.4,719.5 958.6,719.5 959.7,719.5 960.9,714.3 962.0,716.9 963.2,716.7 964.3,719.5 965.5,719.5 966.6,710.0 967.8,714.5 968.9,700.1 970.1,719.1 971.2,719.5 972.4,699.0 973.5,698.5 974.7,718.6 975.8,719.5 977.0,712.4 978.1,709.7 979.3,676.7 980.4,705.3 981.6,719.5 982.7,719.5 983.9,719.4 985.0,713.2 986.2,710.1 987.3,719.5 988.5,719.5 989.6,710.1 990.8,702.2 991.9,706.0 993.1,719.5 994.2,719.5 995.4,719.5 996.5,712.9 997.7,705.2 998.8,719.5 1000.0,719.5 1001.1,719.5 1002.3,712.8 1003.4,719.5 1004.6,719.5 1005.7,698.3 1006.9,703.5 1008.0,717.6 1009.2,719.5 1010.3,719.5 1011.5,719.5" fill="none" stroke="#0aa4a6" stroke-width="1" stroke-linejoin="round" shape-rendering="crispEdges" />
<path d="M384.4 661.3 L375.2 676.2 L393.6 676.2 Z" fill="none" stroke="#a85c06" stroke-width="1" shape-rendering="crispEdges"/>
<text x="380.56" y="696.30" font-size="16" fill="#a85c06" textLength="8.90" lengthAdjust="spacingAndGlyphs" >2</text>
<path d="M551.5 679.9 L542.3 665.0 L560.7 665.0 Z" fill="none" stroke="#a85c06" stroke-width="1" shape-rendering="crispEdges"/>
<text x="547.84" y="660.10" font-size="16" fill="#a85c06" textLength="8.90" lengthAdjust="spacingAndGlyphs" >1</text>
<path d="M663.5 647.3 L654.3 662.2 L672.7 662.2 Z" fill="none" stroke="#a85c06" stroke-width="1" shape-rendering="crispEdges"/>
<text x="659.66" y="682.30" font-size="16" fill="#a85c06" textLength="8.90" lengthAdjust="spacingAndGlyphs" >8</text>
<path d="M720.4 664.7 L711.2 679.6 L729.6 679.6 Z" fill="none" stroke="#a85c06" stroke-width="1" shape-rendering="crispEdges"/>
<text x="716.60" y="699.70" font-size="16" fill="#a85c06" textLength="8.90" lengthAdjust="spacingAndGlyphs" >3</text>
<path d="M384.0 142.0 L374.8 156.9 L393.2 156.9 Z" fill="none" stroke="#0aa4a6" stroke-width="1" shape-rendering="crispEdges"/>
<text x="380.16" y="177.00" font-size="16" fill="#0aa4a6" textLength="8.90" lengthAdjust="spacingAndGlyphs" >2</text>
<path d="M551.4 139.6 L542.2 154.5 L560.6 154.5 Z" fill="none" stroke="#0aa4a6" stroke-width="1" shape-rendering="crispEdges"/>
<text x="547.74" y="174.60" font-size="16" fill="#0aa4a6" textLength="8.90" lengthAdjust="spacingAndGlyphs" >1</text>
<path d="M718.3 141.9 L709.1 156.8 L727.5 156.8 Z" fill="none" stroke="#0aa4a6" stroke-width="1" shape-rendering="crispEdges"/>
<text x="714.90" y="176.90" font-size="16" fill="#0aa4a6" textLength="8.90" lengthAdjust="spacingAndGlyphs" >3</text>
<path d="M217.8 618.3 L208.6 633.2 L227.0 633.2 Z" fill="none" stroke="#0aa4a6" stroke-width="1" shape-rendering="crispEdges"/>
<text x="213.10" y="653.30" font-size="16" fill="#0aa4a6" textLength="8.90" lengthAdjust="spacingAndGlyphs" >4</text>
<path d="M886.2 676.0 L877.0 661.1 L895.4 661.1 Z" fill="none" stroke="#0aa4a6" stroke-width="1" shape-rendering="crispEdges"/>
<text x="882.36" y="656.20" font-size="16" fill="#0aa4a6" textLength="8.90" lengthAdjust="spacingAndGlyphs" >5</text>
<path d="M384.0 310.2 L374.8 325.1 L393.2 325.1 Z" fill="none" stroke="#e070fa" stroke-width="1" shape-rendering="crispEdges"/>
<text x="380.16" y="345.20" font-size="16" fill="#e070fa" textLength="8.90" lengthAdjust="spacingAndGlyphs" >2</text>
<path d="M718.5 308.1 L709.3 323.0 L727.7 323.0 Z" fill="none" stroke="#e070fa" stroke-width="1" shape-rendering="crispEdges"/>
<text x="715.10" y="343.10" font-size="16" fill="#e070fa" textLength="8.90" lengthAdjust="spacingAndGlyphs" >3</text>
<path d="M551.4 201.2 L542.2 216.1 L560.6 216.1 Z" fill="none" stroke="#e070fa" stroke-width="1" shape-rendering="crispEdges"/>
<text x="547.74" y="236.20" font-size="16" fill="#e070fa" textLength="8.90" lengthAdjust="spacingAndGlyphs" >1</text>
<path d="M560.6 199.7 L551.4 184.8 L569.8 184.8 Z" fill="none" stroke="#e070fa" stroke-width="1" shape-rendering="crispEdges"/>
<text x="556.96" y="179.90" font-size="16" fill="#e070fa" textLength="8.90" lengthAdjust="spacingAndGlyphs" >8</text>
<path d="M384.4 668.3 L375.2 683.2 L393.6 683.2 Z" fill="none" stroke="#38f53c" stroke-width="1" shape-rendering="crispEdges"/>
<text x="380.56" y="703.30" font-size="16" fill="#38f53c" textLength="8.90" lengthAdjust="spacingAndGlyphs" >2</text>
<path d="M551.5 686.9 L542.3 672.0 L560.7 672.0 Z" fill="none" stroke="#38f53c" stroke-width="1" shape-rendering="crispEdges"/>
<text x="547.84" y="667.10" font-size="16" fill="#38f53c" textLength="8.90" lengthAdjust="spacingAndGlyphs" >1</text>
<path d="M664.3 638.5 L655.1 653.4 L673.5 653.4 Z" fill="none" stroke="#38f53c" stroke-width="1" shape-rendering="crispEdges"/>
<text x="660.46" y="673.50" font-size="16" fill="#38f53c" textLength="8.90" lengthAdjust="spacingAndGlyphs" >8</text>
<path d="M719.8 671.7 L710.6 686.6 L729.0 686.6 Z" fill="none" stroke="#38f53c" stroke-width="1" shape-rendering="crispEdges"/>
<text x="716.00" y="706.70" font-size="16" fill="#38f53c" textLength="8.90" lengthAdjust="spacingAndGlyphs" >3</text>
<text x="425.62" y="293.20" font-size="16" fill="#a85c06" textLength="13.34" lengthAdjust="spacingAndGlyphs" >1:</text>
<text x="476.64" y="293.20" font-size="16" fill="#a85c06" textLength="40.04" lengthAdjust="spacingAndGlyphs" >4.000</text>
<text x="525.20" y="293.20" font-size="16" fill="#a85c06" textLength="32.00" lengthAdjust="spacingAndGlyphs" >GHz</text>
<text x="647.48" y="293.20" font-size="16" fill="#a85c06" textLength="31.14" lengthAdjust="spacingAndGlyphs" >1.07</text>
<text x="425.62" y="313.20" font-size="16" fill="#a85c06" textLength="13.34" lengthAdjust="spacingAndGlyphs" >2:</text>
<text x="476.40" y="313.20" font-size="16" fill="#a85c06" textLength="40.04" lengthAdjust="spacingAndGlyphs" >3.800</text>
<text x="525.20" y="313.20" font-size="16" fill="#a85c06" textLength="32.00" lengthAdjust="spacingAndGlyphs" >GHz</text>
<text x="647.28" y="313.20" font-size="16" fill="#a85c06" textLength="31.14" lengthAdjust="spacingAndGlyphs" >1.10</text>
<text x="425.62" y="333.20" font-size="16" fill="#a85c06" textLength="13.34" lengthAdjust="spacingAndGlyphs" >3:</text>
<text x="476.64" y="333.20" font-size="16" fill="#a85c06" textLength="40.04" lengthAdjust="spacingAndGlyphs" >4.200</text>
<text x="525.20" y="333.20" font-size="16" fill="#a85c06" textLength="32.00" lengthAdjust="spacingAndGlyphs" >GHz</text>
<text x="647.40" y="333.20" font-size="16" fill="#a85c06" textLength="31.14" lengthAdjust="spacingAndGlyphs" >1.09</text>
<text x="425.62" y="353.20" font-size="16" fill="#a85c06" textLength="13.34" lengthAdjust="spacingAndGlyphs" >8:</text>
<text x="476.64" y="353.20" font-size="16" fill="#a85c06" textLength="40.04" lengthAdjust="spacingAndGlyphs" >4.133</text>
<text x="525.20" y="353.20" font-size="16" fill="#a85c06" textLength="32.00" lengthAdjust="spacingAndGlyphs" >GHz</text>
<text x="647.48" y="353.20" font-size="16" fill="#a85c06" textLength="31.14" lengthAdjust="spacingAndGlyphs" >1.12</text>
<text x="425.62" y="373.20" font-size="16" fill="#0aa4a6" textLength="13.34" lengthAdjust="spacingAndGlyphs" >1:</text>
<text x="476.64" y="373.20" font-size="16" fill="#0aa4a6" textLength="40.04" lengthAdjust="spacingAndGlyphs" >4.000</text>
<text x="525.20" y="373.20" font-size="16" fill="#0aa4a6" textLength="32.00" lengthAdjust="spacingAndGlyphs" >GHz</text>
<text x="621.66" y="373.20" font-size="16" fill="#0aa4a6" textLength="60.49" lengthAdjust="spacingAndGlyphs" >-0.52 dB</text>
<text x="425.62" y="393.20" font-size="16" fill="#0aa4a6" textLength="13.34" lengthAdjust="spacingAndGlyphs" >2:</text>
<text x="476.40" y="393.20" font-size="16" fill="#0aa4a6" textLength="40.04" lengthAdjust="spacingAndGlyphs" >3.800</text>
<text x="525.20" y="393.20" font-size="16" fill="#0aa4a6" textLength="32.00" lengthAdjust="spacingAndGlyphs" >GHz</text>
<text x="621.66" y="393.20" font-size="16" fill="#0aa4a6" textLength="60.49" lengthAdjust="spacingAndGlyphs" >-0.94 dB</text>
<text x="425.62" y="413.20" font-size="16" fill="#0aa4a6" textLength="13.34" lengthAdjust="spacingAndGlyphs" >3:</text>
<text x="476.64" y="413.20" font-size="16" fill="#0aa4a6" textLength="40.04" lengthAdjust="spacingAndGlyphs" >4.200</text>
<text x="525.20" y="413.20" font-size="16" fill="#0aa4a6" textLength="32.00" lengthAdjust="spacingAndGlyphs" >GHz</text>
<text x="621.66" y="413.20" font-size="16" fill="#0aa4a6" textLength="60.49" lengthAdjust="spacingAndGlyphs" >-0.92 dB</text>
<text x="425.62" y="433.20" font-size="16" fill="#0aa4a6" textLength="13.34" lengthAdjust="spacingAndGlyphs" >4:</text>
<text x="476.40" y="433.20" font-size="16" fill="#0aa4a6" textLength="40.04" lengthAdjust="spacingAndGlyphs" >3.600</text>
<text x="525.20" y="433.20" font-size="16" fill="#0aa4a6" textLength="32.00" lengthAdjust="spacingAndGlyphs" >GHz</text>
<text x="612.74" y="433.20" font-size="16" fill="#0aa4a6" textLength="69.39" lengthAdjust="spacingAndGlyphs" >-82.69 dB</text>
<text x="425.62" y="453.20" font-size="16" fill="#0aa4a6" textLength="13.34" lengthAdjust="spacingAndGlyphs" >5:</text>
<text x="476.64" y="453.20" font-size="16" fill="#0aa4a6" textLength="40.04" lengthAdjust="spacingAndGlyphs" >4.400</text>
<text x="525.20" y="453.20" font-size="16" fill="#0aa4a6" textLength="32.00" lengthAdjust="spacingAndGlyphs" >GHz</text>
<text x="612.74" y="453.20" font-size="16" fill="#0aa4a6" textLength="69.39" lengthAdjust="spacingAndGlyphs" >-92.78 dB</text>
<text x="412.00" y="453.20" font-size="16" fill="#0aa4a6" textLength="9.34" lengthAdjust="spacingAndGlyphs" >&gt;</text>
<text x="425.62" y="473.20" font-size="16" fill="#e070fa" textLength="13.34" lengthAdjust="spacingAndGlyphs" >1:</text>
<text x="476.64" y="473.20" font-size="16" fill="#e070fa" textLength="40.04" lengthAdjust="spacingAndGlyphs" >4.000</text>
<text x="525.20" y="473.20" font-size="16" fill="#e070fa" textLength="32.00" lengthAdjust="spacingAndGlyphs" >GHz</text>
<text x="621.66" y="473.20" font-size="16" fill="#e070fa" textLength="60.49" lengthAdjust="spacingAndGlyphs" >-0.52 dB</text>
<text x="425.62" y="493.20" font-size="16" fill="#e070fa" textLength="13.34" lengthAdjust="spacingAndGlyphs" >2:</text>
<text x="476.40" y="493.20" font-size="16" fill="#e070fa" textLength="40.04" lengthAdjust="spacingAndGlyphs" >3.800</text>
<text x="525.20" y="493.20" font-size="16" fill="#e070fa" textLength="32.00" lengthAdjust="spacingAndGlyphs" >GHz</text>
<text x="621.66" y="493.20" font-size="16" fill="#e070fa" textLength="60.49" lengthAdjust="spacingAndGlyphs" >-0.94 dB</text>
<text x="425.62" y="513.20" font-size="16" fill="#e070fa" textLength="13.34" lengthAdjust="spacingAndGlyphs" >3:</text>
<text x="476.64" y="513.20" font-size="16" fill="#e070fa" textLength="40.04" lengthAdjust="spacingAndGlyphs" >4.200</text>
<text x="525.20" y="513.20" font-size="16" fill="#e070fa" textLength="32.00" lengthAdjust="spacingAndGlyphs" >GHz</text>
<text x="621.66" y="513.20" font-size="16" fill="#e070fa" textLength="60.49" lengthAdjust="spacingAndGlyphs" >-0.92 dB</text>
<text x="425.62" y="533.20" font-size="16" fill="#e070fa" textLength="13.34" lengthAdjust="spacingAndGlyphs" >8:</text>
<text x="476.64" y="533.20" font-size="16" fill="#e070fa" textLength="38.85" lengthAdjust="spacingAndGlyphs" >4.011</text>
<text x="525.20" y="533.20" font-size="16" fill="#e070fa" textLength="32.00" lengthAdjust="spacingAndGlyphs" >GHz</text>
<text x="621.66" y="533.20" font-size="16" fill="#e070fa" textLength="60.49" lengthAdjust="spacingAndGlyphs" >-0.52 dB</text>
<text x="425.62" y="553.20" font-size="16" fill="#38f53c" textLength="13.34" lengthAdjust="spacingAndGlyphs" >1:</text>
<text x="476.64" y="553.20" font-size="16" fill="#38f53c" textLength="40.04" lengthAdjust="spacingAndGlyphs" >4.000</text>
<text x="525.20" y="553.20" font-size="16" fill="#38f53c" textLength="32.00" lengthAdjust="spacingAndGlyphs" >GHz</text>
<text x="647.32" y="553.20" font-size="16" fill="#38f53c" textLength="31.14" lengthAdjust="spacingAndGlyphs" >1.05</text>
<text x="425.62" y="573.20" font-size="16" fill="#38f53c" textLength="13.34" lengthAdjust="spacingAndGlyphs" >2:</text>
<text x="476.40" y="573.20" font-size="16" fill="#38f53c" textLength="40.04" lengthAdjust="spacingAndGlyphs" >3.800</text>
<text x="525.20" y="573.20" font-size="16" fill="#38f53c" textLength="32.00" lengthAdjust="spacingAndGlyphs" >GHz</text>
<text x="647.40" y="573.20" font-size="16" fill="#38f53c" textLength="31.14" lengthAdjust="spacingAndGlyphs" >1.09</text>
<text x="425.62" y="593.20" font-size="16" fill="#38f53c" textLength="13.34" lengthAdjust="spacingAndGlyphs" >3:</text>
<text x="476.64" y="593.20" font-size="16" fill="#38f53c" textLength="40.04" lengthAdjust="spacingAndGlyphs" >4.200</text>
<text x="525.20" y="593.20" font-size="16" fill="#38f53c" textLength="32.00" lengthAdjust="spacingAndGlyphs" >GHz</text>
<text x="647.36" y="593.20" font-size="16" fill="#38f53c" textLength="31.14" lengthAdjust="spacingAndGlyphs" >1.08</text>
<text x="425.62" y="613.20" font-size="16" fill="#38f53c" textLength="13.34" lengthAdjust="spacingAndGlyphs" >8:</text>
<text x="476.64" y="613.20" font-size="16" fill="#38f53c" textLength="40.04" lengthAdjust="spacingAndGlyphs" >4.135</text>
<text x="525.20" y="613.20" font-size="16" fill="#38f53c" textLength="32.00" lengthAdjust="spacingAndGlyphs" >GHz</text>
<text x="647.12" y="613.20" font-size="16" fill="#38f53c" textLength="31.14" lengthAdjust="spacingAndGlyphs" >1.14</text>
<path d="M82 130.2 L92.2 136.8 L82 143.4 Z" fill="#0aa4a6"/>
<path d="M1022 130 L1011.2 136.5 L1022 143 Z" fill="#0aa4a6"/>
<path d="M1022 421 L1011.2 427.5 L1022 434 Z" fill="#e070fa"/>
<path d="M1022 713 L1011.2 719.5 L1022 726 Z" fill="#38f53c"/>
<rect x="20" y="725" width="27" height="20" fill="#c8c8c8"/>
<text x="28.64" y="741.00" font-size="16" fill="#000" textLength="8.90" lengthAdjust="spacingAndGlyphs" >1</text>
<text x="91.22" y="743.90" font-size="16" fill="#000" textLength="42.00" lengthAdjust="spacingAndGlyphs" >&gt;Ch1:</text>
<text x="140.97" y="743.90" font-size="16" fill="#000" textLength="34.14" lengthAdjust="spacingAndGlyphs" >Start</text>
<text x="187.59" y="743.90" font-size="16" fill="#000" textLength="96.03" lengthAdjust="spacingAndGlyphs" >3.45000 GHz</text>
<text x="873.26" y="743.90" font-size="16" fill="#000" textLength="33.94" lengthAdjust="spacingAndGlyphs" >Stop</text>
<text x="915.13" y="743.90" font-size="16" fill="#000" textLength="96.19" lengthAdjust="spacingAndGlyphs" >4.55000 GHz</text>
<path d="M289.5 737 H310.9" stroke="#a85c06" stroke-width="1.8"/>
<path d="M316.3 737 H337.5" stroke="#0aa4a6" stroke-width="1.8"/>
<path d="M342.5 737 H363.6" stroke="#e070fa" stroke-width="1.8"/>
<path d="M369.3 737 H391" stroke="#38f53c" stroke-width="1.8"/>
</svg>
<div class="phead"></div>
<div class="pbody"></div>
<div class="pdark"></div>
<div class="tab2"></div>
<div class="pclose"><svg width="22" height="22" viewBox="0 0 22 22"><path d="M6.2 7 L15.8 16 M15.8 7 L6.2 16" stroke="#fff" stroke-width="2.2"/></svg></div>
<div class="t" style="left:1042.66px;top:47.80px;font-size:17px;line-height:19px;height:19px;color:#fff;transform:scaleX(0.9557);">Format</div>
<div class="t" style="left:1199.65px;top:96.90px;font-size:17px;line-height:19px;height:19px;color:#f0f0f0;transform:scaleX(0.9637);">Format 1</div>
<div class="t" style="left:1199.65px;top:157.00px;font-size:17px;line-height:19px;height:19px;color:#e6e6e6;transform:scaleX(0.9643);">Format 2</div>
<div class="sk" style="top:81.9px"></div>
<div class="rad on" style="top:113.5px"></div>
<div class="t" style="left:1085.30px;top:109.90px;font-size:17px;line-height:19px;height:19px;color:#0a0a14;transform:scaleX(0.9236);">Log Mag</div>
<div class="sk" style="top:165.3px"></div>
<div class="rad" style="top:196.9px"></div>
<div class="t" style="left:1086.98px;top:193.08px;font-size:17px;line-height:19px;height:19px;color:#0a0a14;transform:scaleX(0.9395);">Lin Mag</div>
<div class="sk" style="top:248.7px"></div>
<div class="rad" style="top:280.3px"></div>
<div class="t" style="left:1094.15px;top:276.26px;font-size:17px;line-height:19px;height:19px;color:#0a0a14;transform:scaleX(0.8943);">Phase</div>
<div class="sk" style="top:332.1px"></div>
<div class="rad" style="top:363.7px"></div>
<div class="t" style="left:1094.69px;top:359.44px;font-size:17px;line-height:19px;height:19px;color:#0a0a14;transform:scaleX(0.9374);">Delay</div>
<div class="sk" style="top:415.5px"></div>
<div class="rad" style="top:447.1px"></div>
<div class="t" style="left:1094.97px;top:442.62px;font-size:17px;line-height:19px;height:19px;color:#0a0a14;transform:scaleX(0.9542);">Smith</div>
<div class="sk" style="top:498.8px"></div>
<div class="rad" style="top:530.4px"></div>
<div class="t" style="left:1096.92px;top:525.80px;font-size:17px;line-height:19px;height:19px;color:#0a0a14;transform:scaleX(0.9149);">Polar</div>
<div class="sk" style="top:582.0px"></div>
<div class="rad" style="top:613.6px"></div>
<div class="t" style="left:1098.62px;top:608.98px;font-size:17px;line-height:19px;height:19px;color:#0a0a14;transform:scaleX(0.8824);">SWR</div>
<div class="sk" style="top:665.6px"></div>
<div class="t" style="left:1066.52px;top:682.30px;font-size:17px;line-height:19px;height:19px;color:#0a0a14;transform:scaleX(0.9190);">Group Delay</div>
<div class="t" style="left:1072.46px;top:702.10px;font-size:17px;line-height:19px;height:19px;color:#0a0a14;transform:scaleX(0.9638);">Aperture...</div>
<div class="sc" style="left:4.4px;top:756px;width:51.4px;height:19.6px"></div>
<div class="t" style="left:18.98px;top:759.70px;font-size:13.4px;line-height:15px;height:15px;color:#000;transform:scaleX(1.0562);">Tr 2</div>
<div class="sc" style="left:60px;top:756px;width:58.2px;height:19.6px"></div>
<div class="t" style="left:74.80px;top:759.70px;font-size:13.4px;line-height:15px;height:15px;color:#000;transform:scaleX(1.0383);">Ch 1</div>
<div class="sc" style="left:123.1px;top:756px;width:67.4px;height:19.6px"></div>
<div class="t" style="left:137.67px;top:759.70px;font-size:13.4px;line-height:15px;height:15px;color:#000;transform:scaleX(1.0742);">IntTrig</div>
<div class="sc" style="left:195.8px;top:756px;width:57.5px;height:19.6px"></div>
<div class="t" style="left:209.56px;top:759.70px;font-size:13.4px;line-height:15px;height:15px;color:#000;transform:scaleX(1.0672);">Swp</div>
<div class="sc" style="left:258.5px;top:756px;width:69.5px;height:19.6px"></div>
<div class="t" style="left:270.83px;top:759.70px;font-size:13.4px;line-height:15px;height:15px;color:#000;transform:scaleX(1.0602);">BW=1k</div>
<div class="sc" style="left:333px;top:756px;width:82.8px;height:19.6px"></div>
<div class="t" style="left:347.30px;top:759.70px;font-size:13.4px;line-height:15px;height:15px;color:#000;transform:scaleX(1.0505);">C  2-Port</div>
<div class="sc" style="left:420.3px;top:756px;width:64.7px;height:19.6px"></div>
<div class="t" style="left:432.35px;top:759.70px;font-size:13.4px;line-height:15px;height:15px;color:#a2a2a2;transform:scaleX(1.0726);">SrcCal</div>
<div class="sc" style="left:489.5px;top:756px;width:51.5px;height:19.6px"></div>
<div class="t" style="left:503.74px;top:759.70px;font-size:13.4px;line-height:15px;height:15px;color:#a2a2a2;transform:scaleX(1.0922);">Sim</div>
<div class="sc" style="left:545.4px;top:756px;width:58.2px;height:19.6px"></div>
<div class="t" style="left:557.21px;top:759.70px;font-size:13.4px;line-height:15px;height:15px;color:#a2a2a2;transform:scaleX(1.0778);">Pulse</div>
<div class="sc" style="left:608px;top:756px;width:671.6px;height:19.6px"></div>
<div class="sc" style="left:4.4px;top:780px;width:45.2px;height:19.8px"></div>
<div class="t" style="left:15.95px;top:783.60px;font-size:13.4px;line-height:15px;height:15px;color:#a2a2a2;transform:scaleX(1.0761);">Svc</div>
<div class="sc" style="left:54.4px;top:780px;width:57.4px;height:19.8px"></div>
<div class="t" style="left:64.81px;top:783.60px;font-size:13.4px;line-height:15px;height:15px;color:#000;transform:scaleX(1.0750);">RFOn</div>
<div class="sc" style="left:116.9px;top:780px;width:69.9px;height:19.8px"></div>
<div class="t" style="left:120.80px;top:783.60px;font-size:13.4px;line-height:15px;height:15px;color:#000;transform:scaleX(1.0592);">UpdateOn</div>
<div class="sc" style="left:192px;top:780px;width:57.2px;height:19.8px"></div>
<div class="t" style="left:201.65px;top:783.60px;font-size:13.4px;line-height:15px;height:15px;color:#000;transform:scaleX(1.0857);">IntRef</div>
<div class="sc" style="left:254.2px;top:780px;width:855.0px;height:19.8px"></div>
<div class="t" style="left:258.10px;top:783.60px;font-size:13.4px;line-height:15px;height:15px;color:#000;transform:scaleX(1.0485);">a8447.1.csa has been saved.</div>
<div class="sc" style="left:1114px;top:780px;width:45.4px;height:19.8px"></div>
<div class="t" style="left:1124.40px;top:783.60px;font-size:13.4px;line-height:15px;height:15px;color:#000;transform:scaleX(1.0819);">LCL</div>
<div class="sc" style="left:1164px;top:780px;width:115.8px;height:19.8px"></div>
<div class="t" style="left:1176.00px;top:783.80px;font-size:12px;line-height:14px;height:14px;color:#000;transform:scaleX(1.0081);">2022/03/24-11:14</div>
<svg class="ov" style="z-index:9" width="1286" height="806" viewBox="0 0 1286 806"><g opacity="0.137"><text y="366.9" font-family='"Liberation Serif", serif' font-weight="bold" font-size="66" fill="#000"><tspan x="201.0" textLength="52.6" lengthAdjust="spacingAndGlyphs">w</tspan><tspan x="255.5" textLength="52.6" lengthAdjust="spacingAndGlyphs">w</tspan><tspan x="309.9" textLength="52.6" lengthAdjust="spacingAndGlyphs">w</tspan><tspan x="365.0" textLength="20.0" lengthAdjust="spacingAndGlyphs">.</tspan><tspan x="386.5" textLength="40.2" lengthAdjust="spacingAndGlyphs">x</tspan><tspan x="426.7" textLength="41.3" lengthAdjust="spacingAndGlyphs">a</tspan><tspan x="466.2" textLength="46.9" lengthAdjust="spacingAndGlyphs">h</tspan><tspan x="515.5" textLength="40.3" lengthAdjust="spacingAndGlyphs">x</tspan><tspan x="556.9" textLength="53.0" lengthAdjust="spacingAndGlyphs">m</tspan><tspan x="609.9" textLength="22.2" lengthAdjust="spacingAndGlyphs">i</tspan><tspan x="634.4" textLength="36.3" lengthAdjust="spacingAndGlyphs">c</tspan><tspan x="670.2" textLength="33.4" lengthAdjust="spacingAndGlyphs">r</tspan><tspan x="704.3" textLength="40.5" lengthAdjust="spacingAndGlyphs">o</tspan><tspan x="745.5" textLength="53.0" lengthAdjust="spacingAndGlyphs">w</tspan><tspan x="798.7" textLength="38.6" lengthAdjust="spacingAndGlyphs">a</tspan><tspan x="839.1" textLength="37.3" lengthAdjust="spacingAndGlyphs">v</tspan><tspan x="876.3" textLength="37.3" lengthAdjust="spacingAndGlyphs">e</tspan><tspan x="917.1" textLength="17.0" lengthAdjust="spacingAndGlyphs">.</tspan><tspan x="937.3" textLength="33.0" lengthAdjust="spacingAndGlyphs">c</tspan><tspan x="972.5" textLength="40.6" lengthAdjust="spacingAndGlyphs">o</tspan><tspan x="1014.3" textLength="56.9" lengthAdjust="spacingAndGlyphs">m</tspan></text></g></svg>
</body></html>
